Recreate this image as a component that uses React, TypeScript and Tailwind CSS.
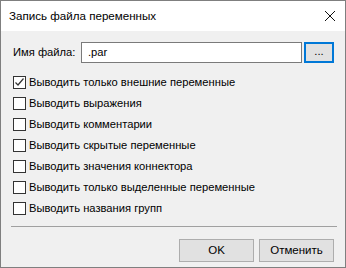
const options = [
  { label: "Выводить только внешние переменные", checked: true },
  { label: "Выводить выражения", checked: false },
  { label: "Выводить комментарии", checked: false },
  { label: "Выводить скрытые переменные", checked: false },
  { label: "Выводить значения коннектора", checked: false },
  { label: "Выводить только выделенные переменные", checked: false },
  { label: "Выводить названия групп", checked: false },
];

function CheckBox({ checked }: { checked: boolean }) {
  return (
    <span className="flex h-[13px] w-[13px] shrink-0 items-center justify-center border border-[#333] bg-white">
      {checked && (
        <svg width="11" height="11" viewBox="0 0 11 11">
          <path d="M1.5 5.5 L4 8 L9.5 1.5" fill="none" stroke="#333" strokeWidth="1.2" />
        </svg>
      )}
    </span>
  );
}

function DialogButton({ children }: { children: string }) {
  return (
    <button className="flex h-[23px] w-[75px] items-center justify-center border border-[#adadad] bg-[#e1e1e1] text-[11.5px] text-black">
      {children}
    </button>
  );
}

export default function App() {
  return (
    <div
      className="flex h-[268px] w-[346px] flex-col border border-[#7f7f7f] bg-[#f0f0f0] text-[11.2px] text-black"
      style={{ fontFamily: '"Liberation Sans", Arial, sans-serif' }}
    >
      <div className="flex h-[30px] items-center justify-between bg-white pl-[8px] pr-[10px]">
        <span className="text-[11.6px]">Запись файла переменных</span>
        <svg width="10" height="10" viewBox="0 0 10 10">
          <path d="M0 0 L10 10 M10 0 L0 10" stroke="#111" strokeWidth="1" />
        </svg>
      </div>

      <div className="flex flex-col px-[11px]">
        <div className="mt-[11px] flex h-[21px] items-center">
          <span className="w-[69px] pl-[1px]">Имя файла:</span>
          <div className="flex h-[21px] w-[221px] items-center border border-[#7a7a7a] bg-white pl-[6px]">
            .par
          </div>
          <button className="ml-[2px] flex h-[21px] w-[30px] items-center justify-center border-2 border-[#0078d7] bg-[#e1e1e1] pb-[2px] leading-none">
            ...
          </button>
        </div>

        <div className="mt-[9px] flex flex-col">
          {options.map((o) => (
            <div key={o.label} className="flex h-[21px] items-center gap-[3px] pl-[1px]">
              <CheckBox checked={o.checked} />
              <span>{o.label}</span>
            </div>
          ))}
        </div>

        <div className="ml-[-1px] mt-[7px] h-px w-[326px] bg-[#a0a0a0]" />

        <div className="mt-[12px] flex justify-end gap-[5px]">
          <DialogButton>OK</DialogButton>
          <DialogButton>Отменить</DialogButton>
        </div>
      </div>
    </div>
  );
}
